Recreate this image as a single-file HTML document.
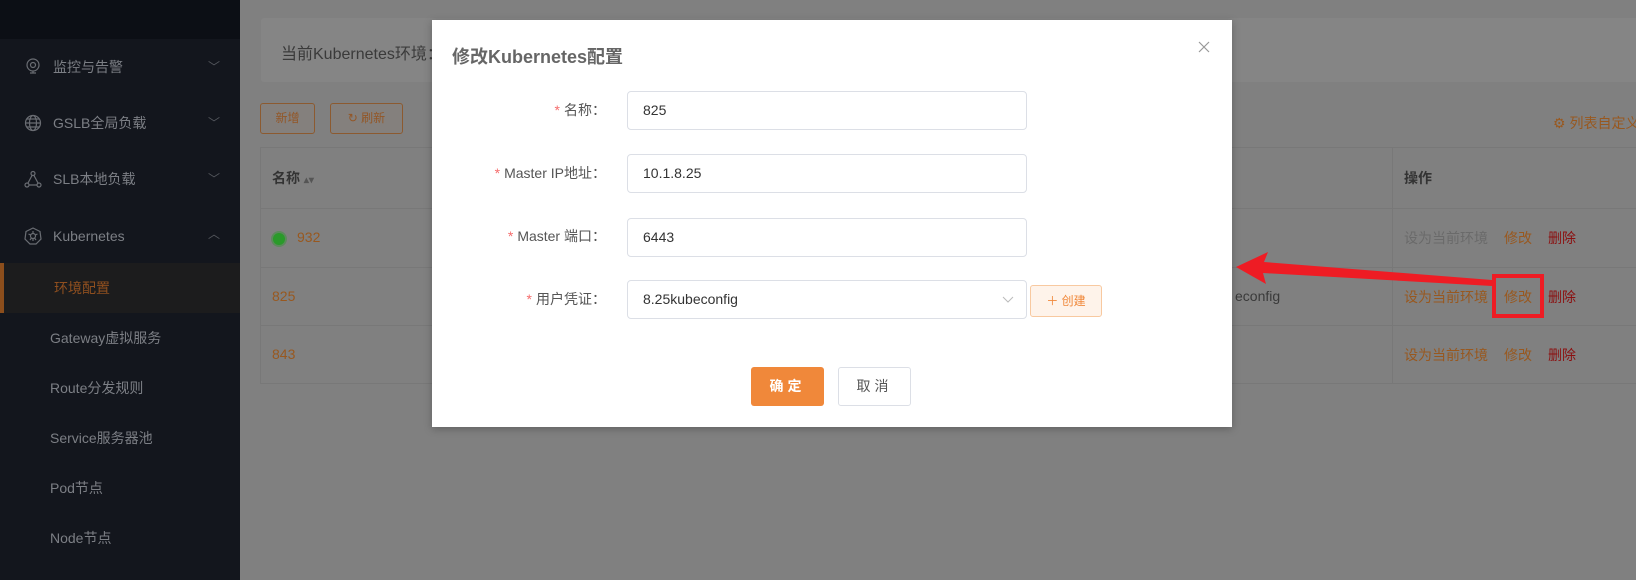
<!DOCTYPE html>
<html><head><meta charset="utf-8"><style>
*{box-sizing:border-box;margin:0;padding:0}
body{width:1636px;height:580px;overflow:hidden;background:#808080;font-family:"Liberation Sans","Noto Sans CJK SC",sans-serif;font-size:14px;position:relative}
.abs{position:absolute}
.side{left:0;top:0;width:240px;height:580px;background:#13161d}
.side .top{position:absolute;left:0;top:0;width:240px;height:39px;background:#0c0f15}
.mi{position:absolute;left:0;width:240px;color:#7c7f85;font-size:14px;line-height:20px}
.mi .ic{position:absolute;left:24px;top:1px;width:18px;height:18px}
.mi .tx{position:absolute;left:53px}
.mi .ch{position:absolute;left:208px;top:0;color:#55585e;font-size:12px}
.sub{position:absolute;left:50px;color:#7c7f85;font-size:14px}
.card{left:261px;top:18px;width:1400px;height:64px;background:#858585;border-radius:3px}
.btn{position:absolute;border:1px solid #8c5a30;border-radius:3px;color:#935626;font-size:12px;text-align:center;background:#84807d}
.table{left:260px;top:147px;width:1400px;height:237px;border:1px solid #787878}
.row{position:absolute;left:0;width:1400px;border-bottom:1px solid #787878}
.or{color:#98581f}
.modal{left:432px;top:20px;width:800px;height:407px;background:#fff;box-shadow:0 2px 8px rgba(0,0,0,.25)}
.lbl{position:absolute;right:626px;color:#555;font-size:14px;text-align:right;white-space:nowrap}
.lbl b{color:#f56c6c;font-weight:normal;margin-right:4px}
.inp{position:absolute;left:195px;width:400px;height:39px;border:1px solid #dcdfe6;border-radius:4px;padding-left:15px;line-height:37px;color:#333;font-size:14px}
.act{position:absolute;left:1143px;white-space:nowrap}
.act span{position:absolute;top:0}
</style></head><body>
<div class="abs side">
 <div class="top"></div>
 <div class="mi" style="top:57px"><svg class="ic" viewBox="0 0 18 18" fill="none" stroke="#6a6d73" stroke-width="1.2"><circle cx="9" cy="7" r="6"/><circle cx="9" cy="7" r="2.5"/><path d="M6 15h6M9 13v2"/></svg><span class="tx">监控与告警</span><span class="ch">﹀</span></div>
 <div class="mi" style="top:113px"><svg class="ic" viewBox="0 0 18 18" fill="none" stroke="#6a6d73" stroke-width="1.2"><circle cx="9" cy="9" r="7.5"/><ellipse cx="9" cy="9" rx="3.5" ry="7.5"/><path d="M1.5 9h15M3 5h12M3 13h12"/></svg><span class="tx">GSLB全局负载</span><span class="ch">﹀</span></div>
 <div class="mi" style="top:169px"><svg class="ic" viewBox="0 0 18 18" fill="none" stroke="#6a6d73" stroke-width="1.2"><circle cx="9" cy="3.5" r="2"/><circle cx="3" cy="15" r="2"/><circle cx="15" cy="15" r="2"/><path d="M8 5.5L4 13M10 5.5L14 13M5 15h8"/></svg><span class="tx">SLB本地负载</span><span class="ch">﹀</span></div>
 <div class="mi" style="top:226px"><svg class="ic" viewBox="0 0 18 18" fill="none" stroke="#6a6d73" stroke-width="1.2"><path d="M9 1l7 3.5 1 7.5-5 5H6l-5-5 1-7.5z"/><circle cx="9" cy="9" r="2.5"/><path d="M9 4v2.5M9 11.5V14M4.5 7l2.3 1M13.5 7l-2.3 1M6 13l1.5-2M12 13l-1.5-2"/></svg><span class="tx">Kubernetes</span><span class="ch" style="top:-2px">︿</span></div>
 <div class="abs" style="left:0;top:263px;width:240px;height:50px;background:#1c1c1d;border-left:4px solid #8c4e1c"></div>
 <div class="sub" style="left:54px;top:278px;color:#8f4f1f">环境配置</div>
 <div class="sub" style="top:328px">Gateway虚拟服务</div>
 <div class="sub" style="top:378px">Route分发规则</div>
 <div class="sub" style="top:428px">Service服务器池</div>
 <div class="sub" style="top:478px">Pod节点</div>
 <div class="sub" style="top:528px">Node节点</div>
</div>
<div class="abs card"><span class="abs" style="left:20px;top:22px;color:#3a3a3a;font-size:16px">当前Kubernetes环境：</span></div>
<div class="btn" style="left:260px;top:103px;width:55px;height:31px;line-height:29px">新增</div>
<div class="btn" style="left:330px;top:103px;width:73px;height:31px;line-height:29px">↻ 刷新</div>
<div class="abs or" style="left:1553px;top:113px;font-size:14px;white-space:nowrap">⚙ 列表自定义</div>
<div class="abs table">
 <div class="row" style="top:0;height:61px"><span class="abs" style="left:11px;top:20px;color:#333;font-weight:bold">名称 <span style="color:#555;font-size:10px">▴▾</span></span><span class="abs" style="left:943px;top:20px;color:#555;font-size:10px">⬍</span><span class="abs" style="left:1143px;top:20px;color:#333;font-weight:bold">操作</span></div>
 <div class="row" style="top:61px;height:59px"><span class="abs" style="left:12px;top:24px;width:12px;height:12px;border-radius:50%;background:#2a9a2a;box-shadow:0 0 0 2px #5c8a5c"></span><span class="abs or" style="left:36px;top:20px">932</span></div>
 <div class="row" style="top:120px;height:58px"><span class="abs or" style="left:11px;top:20px">825</span><span class="abs" style="left:974px;top:20px;color:#3a3a3a">econfig</span></div>
 <div class="row" style="top:178px;height:58px;border-bottom:none"><span class="abs or" style="left:11px;top:20px">843</span></div>
 <div class="abs" style="left:1131px;top:0;width:1px;height:236px;background:#787878"></div>
 <div class="act" style="top:80px"><span style="left:0;color:#6a6a6a">设为当前环境</span><span class="or" style="left:100px">修改</span><span style="left:144px;color:#8b1010">删除</span></div>
 <div class="act" style="top:139px"><span class="or" style="left:0">设为当前环境</span><span class="or" style="left:100px">修改</span><span style="left:144px;color:#8b1010">删除</span></div>
 <div class="act" style="top:197px"><span class="or" style="left:0">设为当前环境</span><span class="or" style="left:100px">修改</span><span style="left:144px;color:#8b1010">删除</span></div>
</div>
<div class="abs modal">
 <div class="abs" style="left:20px;top:23px;font-size:18px;font-weight:bold;color:#666">修改Kubernetes配置</div>
 <svg class="abs" style="left:766px;top:21px" width="12" height="12" stroke="#999" stroke-width="1.2"><path d="M1 1L11 11M11 1L1 11"/></svg>
 <div class="lbl" style="top:80px"><b>*</b>名称：</div><div class="inp" style="top:71px">825</div>
 <div class="lbl" style="top:143px"><b>*</b>Master IP地址：</div><div class="inp" style="top:134px">10.1.8.25</div>
 <div class="lbl" style="top:206px"><b>*</b>Master 端口：</div><div class="inp" style="top:198px">6443</div>
 <div class="lbl" style="top:269px"><b>*</b>用户凭证：</div><div class="inp" style="top:260px">8.25kubeconfig<svg class="abs" style="right:12px;top:15px" width="12" height="8" stroke="#bbb" fill="none"><path d="M1 1l5 5 5-5"/></svg></div>
 <div class="abs" style="left:598px;top:265px;width:72px;height:32px;border:1px solid #f8c9a0;background:#fef3ea;border-radius:3px;color:#f0883a;font-size:12px;text-align:center;line-height:30px">＋ 创建</div>
 <div class="abs" style="left:319px;top:347px;width:73px;height:39px;background:#f0883a;border-radius:3px;color:#fff;font-weight:bold;text-align:center;line-height:39px;letter-spacing:4px">确定</div>
 <div class="abs" style="left:406px;top:347px;width:73px;height:39px;border:1px solid #dcdfe6;border-radius:3px;color:#555;text-align:center;line-height:37px;letter-spacing:4px">取消</div>
</div>
<svg class="abs" style="left:0;top:0" width="1636" height="580">
 <polygon points="1236,267 1268,252 1264,262 1492,280 1492,286 1263,273 1266,284" fill="#ee1c24"/>
 <rect x="1494" y="276" width="48" height="40" fill="none" stroke="#ee1c24" stroke-width="4"/>
</svg>
</body></html>
